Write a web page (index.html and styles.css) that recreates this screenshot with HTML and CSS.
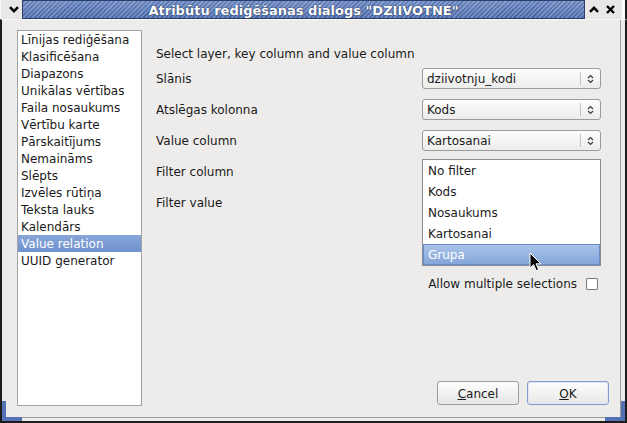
FILE: index.html
```html
<!DOCTYPE html>
<html lang="lv">
<head>
<meta charset="utf-8">
<title>Atribūtu rediģēšanas dialogs</title>
<link rel="stylesheet" href="styles.css">
</head>
<body>
<div class="window">
  <div class="titlebar">
    <div class="tb-btn tb-menu">
      <svg width="10" height="7" viewBox="0 0 10 7"><path d="M1 1.2 L5 5.2 L9 1.2" fill="none" stroke="#000" stroke-width="2.4"/></svg>
    </div>
    <div class="tb-title">Atribūtu rediģēšanas dialogs "DZIIVOTNE"</div>
    <div class="tb-btn tb-max">
      <svg width="10" height="7" viewBox="0 0 10 7"><path d="M1 5.8 L5 1.8 L9 5.8" fill="none" stroke="#000" stroke-width="2.4"/></svg>
    </div>
    <div class="tb-btn tb-close">
      <svg width="9" height="9" viewBox="0 0 9 9"><path d="M1 1 L8 8 M8 1 L1 8" fill="none" stroke="#000" stroke-width="2.4"/></svg>
    </div>
  </div>

  <div class="frame">
    <div class="inner">
      <ul class="list">
        <li>Līnijas rediģēšana</li>
        <li>Klasificēšana</li>
        <li>Diapazons</li>
        <li>Unikālas vērtības</li>
        <li>Faila nosaukums</li>
        <li>Vērtību karte</li>
        <li>Pārskaitījums</li>
        <li>Nemaināms</li>
        <li>Slēpts</li>
        <li>Izvēles rūtiņa</li>
        <li>Teksta lauks</li>
        <li>Kalendārs</li>
        <li class="selected">Value relation</li>
        <li>UUID generator</li>
      </ul>

      <div class="panel">
        <p class="intro">Select layer, key column and value column</p>

        <div class="form">
          <span class="label">Slānis</span>
          <div class="combo">
            <span class="combo-text">dziivotnju_kodi</span>
            <span class="combo-sep"></span>
            <span class="combo-arrow"><svg width="7" height="10" viewBox="0 0 7 10"><path d="M1 4 L3.5 1.5 L6 4 M1 6 L3.5 8.5 L6 6" fill="none" stroke="#3a3a3a" stroke-width="1.2"/></svg></span>
          </div>

          <span class="label">Atslēgas kolonna</span>
          <div class="combo">
            <span class="combo-text">Kods</span>
            <span class="combo-sep"></span>
            <span class="combo-arrow"><svg width="7" height="10" viewBox="0 0 7 10"><path d="M1 4 L3.5 1.5 L6 4 M1 6 L3.5 8.5 L6 6" fill="none" stroke="#3a3a3a" stroke-width="1.2"/></svg></span>
          </div>

          <span class="label">Value column</span>
          <div class="combo">
            <span class="combo-text">Kartosanai</span>
            <span class="combo-sep"></span>
            <span class="combo-arrow"><svg width="7" height="10" viewBox="0 0 7 10"><path d="M1 4 L3.5 1.5 L6 4 M1 6 L3.5 8.5 L6 6" fill="none" stroke="#3a3a3a" stroke-width="1.2"/></svg></span>
          </div>

          <span class="label">Filter column</span>
          <div class="field field-open">
            <ul class="popup">
              <li>No filter</li>
              <li>Kods</li>
              <li>Nosaukums</li>
              <li>Kartosanai</li>
              <li class="hover">Grupa</li>
            </ul>
          </div>

          <span class="label">Filter value</span>
          <div class="field"></div>
        </div>

        <label class="check-row"><span class="check-text">Allow multiple selections</span> <span class="checkbox"></span></label>

        <div class="buttons">
          <button class="btn"><u>C</u>ancel</button>
          <button class="btn btn-default"><u>O</u>K</button>
        </div>
      </div>
    </div>
  </div>

  <span class="grip grip-bl"></span>
  <span class="grip grip-br"></span>

  <svg class="cursor" width="13" height="20" viewBox="0 0 13 20">
    <path d="M1 1 L1 16 L4.6 12.6 L7.2 18.6 L9.6 17.6 L7 11.8 L11.8 11.8 Z" fill="#000" stroke="#fff" stroke-width="1" stroke-linejoin="round"/>
  </svg>
</div>
</body>
</html>
```

FILE: styles.css
```css
* {
  box-sizing: border-box;
}

body {
  margin: 0;
  background: #edeceb;
  font-family: "DejaVu Sans", "Noto Sans", sans-serif;
  font-size: 12px;
  color: #1a1a1a;
}

.window {
  position: relative;
  width: 627px;
  height: 423px;
  display: flex;
  flex-direction: column;
  overflow: hidden;
}

/* ---- title bar ---- */
.titlebar {
  height: 19px;
  display: flex;
  background: #e8e7e5;
  border-right: 2px solid #1c1c1c;
  padding-right: 7px;
  box-shadow: inset -6px 0 0 -3px #fbfbfb;
}

.tb-btn {
  display: flex;
  align-items: center;
  justify-content: center;
}

.tb-menu {
  width: 22px;
  padding-left: 4px;
  border-left: 1px solid #fafafa;
}

.tb-max {
  width: 20px;
  padding-right: 2px;
}

.tb-close {
  width: 13px;
  padding-right: 2px;
}

.tb-title {
  flex: 1;
  border: 1px solid #2b3f6d;
  background:
    linear-gradient(to bottom, rgba(255, 255, 255, 0.14), rgba(0, 0, 0, 0.06)),
    repeating-linear-gradient(135deg, #4d6cac 0 1.6px, #7590ca 1.6px 3.2px);
  color: #fff;
  font-weight: bold;
  font-size: 13px;
  line-height: 17px;
  padding-top: 1px;
  text-align: center;
  white-space: nowrap;
  text-shadow: 0 0 1px #1d2c52, 0 0 1px #1d2c52;
}

/* ---- window frame ---- */
.frame {
  flex: 1;
  display: flex;
  border: 2px solid #1c1c1c;
  border-top: 1px solid #f7f7f6;
  padding: 0 4px 3px 0;
}

.inner {
  flex: 1;
  display: flex;
  border-right: 1px solid #9f9f9f;
  border-bottom: 1px solid #9f9f9f;
  padding: 10px 11px 11px 15px;
}

/* ---- widget type list ---- */
.list {
  width: 125px;
  margin: 0;
  padding: 0;
  list-style: none;
  background: #fff;
  border: 1px solid #a3a3a3;
}

.list li {
  height: 17px;
  line-height: 17px;
  padding: 1px 0 0 3px;
  white-space: nowrap;
}

.list li.selected {
  background: linear-gradient(to bottom, #87a6d9, #6f91cb);
  color: #fff;
}

/* ---- configuration panel ---- */
.panel {
  flex: 1;
  display: flex;
  flex-direction: column;
  padding-left: 14px;
}

.intro {
  margin: 17px 0 0;
  line-height: 15px;
  height: 15px;
}

.form {
  margin-top: 6px;
  display: grid;
  grid-template-columns: 266px 179px;
  grid-auto-rows: 21px;
  row-gap: 10px;
}

.label {
  align-self: center;
  line-height: 15px;
  padding-top: 2px;
}

.combo {
  display: flex;
  align-items: center;
  border: 1px solid #9b9b9b;
  border-radius: 3px;
  background: linear-gradient(to bottom, #fdfdfd, #ececeb);
}

.combo-text {
  flex: 1;
  padding: 2px 0 0 4px;
  line-height: 15px;
}

.combo-sep {
  width: 1px;
  height: 13px;
  background: #c3c3c3;
}

.combo-arrow {
  width: 19px;
  display: flex;
  align-items: center;
  justify-content: center;
}

.field-open {
  position: relative;
}

/* open dropdown of the filter column combo */
.popup {
  position: absolute;
  top: -2px;
  left: 0;
  width: 179px;
  margin: 0;
  padding: 0;
  list-style: none;
  background: #fff;
  border: 1px solid #8e8e8e;
  z-index: 2;
}

.popup li {
  height: 21px;
  line-height: 21px;
  padding: 1px 0 0 5px;
}

.popup li.hover {
  background: linear-gradient(to bottom, #aac4e9, #85a6da);
  border: 1px solid #6a8cc7;
  line-height: 19px;
  padding: 1px 0 0 4px;
  color: #fff;
}

.check-row {
  margin: 62px 11px 0 0;
  display: flex;
  justify-content: flex-end;
  align-items: center;
  gap: 9px;
  line-height: 15px;
}

.check-text {
  padding-top: 2px;
}

.checkbox {
  width: 12px;
  height: 12px;
  border: 1px solid #7b7b7b;
  border-radius: 1px;
  background: #fff;
}

.buttons {
  margin-top: auto;
  margin-bottom: 1px;
  display: flex;
  justify-content: flex-end;
  gap: 8px;
}

.btn {
  width: 82px;
  height: 24px;
  padding: 2px 0 0;
  font-family: inherit;
  font-size: 12px;
  color: #1a1a1a;
  border: 1px solid #9c9c9c;
  border-radius: 3px;
  background: linear-gradient(to bottom, #fefefe, #e7e6e5);
}

.btn-default {
  border-color: #7f9bcf;
  box-shadow: inset 0 0 0 1px #dfe7f5;
}

/* resize grips at the bottom corners */
.grip {
  position: absolute;
  top: 401px;
  width: 20px;
  height: 20px;
  border-bottom: 4px solid #5371b4;
}

.grip-bl {
  left: 2px;
  border-left: 4px solid #5371b4;
}

.grip-br {
  left: 605px;
  border-right: 4px solid #5371b4;
}

.cursor {
  position: absolute;
  left: 529px;
  top: 252px;
  z-index: 3;
}
```
